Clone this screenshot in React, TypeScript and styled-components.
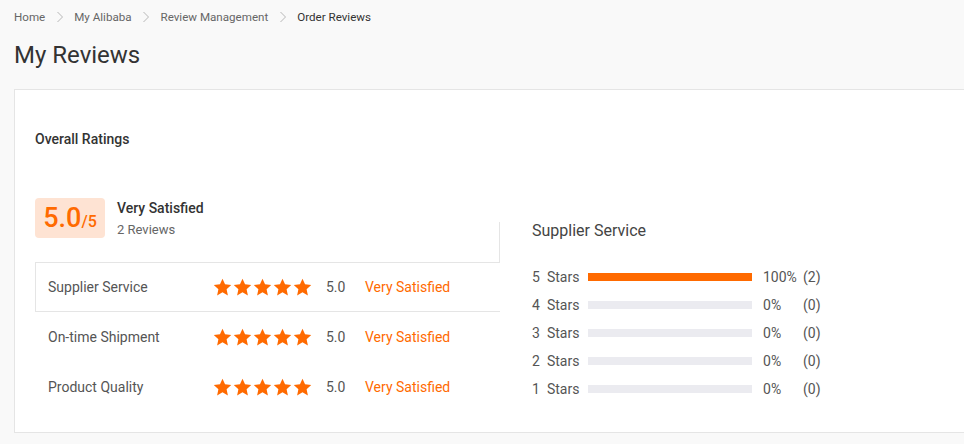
import React from "react";
import styled, { createGlobalStyle } from "styled-components";

const GlobalStyle = createGlobalStyle`
  html, body {
    margin: 0;
    padding: 0;
    overflow: hidden;
    background: #f9f9f9;
    font-family: Roboto, "Liberation Sans", Arial, sans-serif;
    color: #333;
  }
  * { box-sizing: border-box; }
`;

const ORANGE = "#ff6a00";

const Page = styled.div`
  padding: 8px 0 0 14px;
  width: 1000px;
`;

const Crumbs = styled.nav`
  display: flex;
  align-items: center;
  height: 18px;
  font-size: 11.6px;
  line-height: 18px;
  color: #666;
`;

const Crumb = styled.span<{ $current?: boolean }>`
  color: ${(p) => (p.$current ? "#333" : "#666")};
`;

const Sep = styled.span`
  display: inline-flex;
  width: 29px;
  justify-content: center;
  color: #b5b5b5;
`;

const Title = styled.h1`
  margin: 14px 0 0;
  font-size: 24px;
  line-height: 30px;
  font-weight: 400;
  color: #333;
`;

const Card = styled.section`
  margin-top: 19px;
  background: #fff;
  border: 1px solid #e5e5e5;
  padding: 39px 0 20px 20px;
`;

const SectionTitle = styled.h2`
  margin: 0;
  font-size: 14px;
  line-height: 20px;
  font-weight: 500;
  color: #333;
`;

const Body = styled.div`
  display: flex;
  margin-top: 49px;
`;

const LeftCol = styled.div`
  width: 465px;
  flex: none;
`;

const Summary = styled.div`
  display: flex;
  align-items: flex-start;
  gap: 12px;
  height: 40px;
`;

const ScoreBox = styled.div`
  width: 70px;
  height: 40px;
  border-radius: 4px;
  background: #fee3d3;
  color: ${ORANGE};
  display: flex;
  align-items: baseline;
  justify-content: center;
  padding-top: 2px;
`;

const ScoreBig = styled.span`
  font-size: 27px;
  line-height: 36px;
  font-weight: 500;
`;

const ScoreSmall = styled.span`
  font-size: 16px;
  font-weight: 500;
`;

const SummaryText = styled.div`
  display: flex;
  flex-direction: column;
  gap: 2px;
`;

const SummaryLabel = styled.div`
  font-size: 14px;
  line-height: 20px;
  font-weight: 500;
  color: #333;
`;

const SummaryCount = styled.div`
  font-size: 13px;
  line-height: 20px;
  color: #666;
`;

const List = styled.div`
  margin-top: -16px;
  padding-top: 40px;
  border-right: 1px solid #e5e5e5;
`;

const Row = styled.div<{ $active?: boolean }>`
  position: relative;
  display: grid;
  grid-template-columns: 165px 99px 53px auto;
  align-items: center;
  height: 50px;
  padding-left: 12px;
  margin-right: -1px;
  background: #fff;
  border: 1px solid ${(p) => (p.$active ? "#e5e5e5" : "transparent")};
  border-right: none;
`;

const RowLabel = styled.span`
  font-size: 14px;
  color: #555;
`;

const Stars = styled.span`
  display: flex;
  gap: 1px;
`;

const RowScore = styled.span`
  padding-left: 14px;
  font-size: 14px;
  color: #555;
`;

const RowVerdict = styled.span`
  font-size: 14px;
  color: ${ORANGE};
`;

const RightCol = styled.div`
  flex: 1;
  padding: 22px 0 0 32px;
`;

const RightTitle = styled.h3`
  margin: 0 0 21px;
  font-size: 16px;
  line-height: 22px;
  font-weight: 400;
  color: #444;
`;

const DistRow = styled.div`
  display: grid;
  grid-template-columns: 56px 164px 40px auto;
  align-items: center;
  height: 28px;
  font-size: 14px;
  color: #555;
`;

const DistLabel = styled.span`
  display: flex;
  gap: 7px;
`;

const Track = styled.div`
  height: 8px;
  background: #ebebf0;
`;

const Fill = styled.div`
  height: 100%;
  background: ${ORANGE};
`;

const Pct = styled.span`
  padding-left: 11px;
  white-space: nowrap;
`;

const Count = styled.span`
  padding-left: 11px;
`;

const Chevron = () => (
  <svg width="8" height="12" viewBox="0 0 8 12" fill="none">
    <polyline points="1.5,1 6.5,6 1.5,11" stroke="#b8b8b8" strokeWidth="1" />
  </svg>
);

const Star = () => (
  <svg width="19" height="19" viewBox="0 0 24 24">
    <polygon
      fill={ORANGE}
      points="12,1 15.2,8 23,8.9 17.2,14.1 18.8,22 12,18 5.2,22 6.8,14.1 1,8.9 8.8,8"
    />
  </svg>
);

const ratings = [
  { label: "Supplier Service", active: true },
  { label: "On-time Shipment", active: false },
  { label: "Product Quality", active: false },
];

const dist = [
  { n: 5, pct: 100, count: 2 },
  { n: 4, pct: 0, count: 0 },
  { n: 3, pct: 0, count: 0 },
  { n: 2, pct: 0, count: 0 },
  { n: 1, pct: 0, count: 0 },
];

export default function App() {
  return (
    <>
      <GlobalStyle />
      <Page>
        <Crumbs>
          <Crumb>Home</Crumb>
          <Sep><Chevron /></Sep>
          <Crumb>My Alibaba</Crumb>
          <Sep><Chevron /></Sep>
          <Crumb>Review Management</Crumb>
          <Sep><Chevron /></Sep>
          <Crumb $current>Order Reviews</Crumb>
        </Crumbs>
        <Title>My Reviews</Title>
        <Card>
          <SectionTitle>Overall Ratings</SectionTitle>
          <Body>
            <LeftCol>
              <Summary>
                <ScoreBox>
                  <ScoreBig>5.0</ScoreBig>
                  <ScoreSmall>/5</ScoreSmall>
                </ScoreBox>
                <SummaryText>
                  <SummaryLabel>Very Satisfied</SummaryLabel>
                  <SummaryCount>2 Reviews</SummaryCount>
                </SummaryText>
              </Summary>
              <List>
                {ratings.map((r) => (
                  <Row key={r.label} $active={r.active}>
                    <RowLabel>{r.label}</RowLabel>
                    <Stars>
                      {[0, 1, 2, 3, 4].map((i) => (
                        <Star key={i} />
                      ))}
                    </Stars>
                    <RowScore>5.0</RowScore>
                    <RowVerdict>Very Satisfied</RowVerdict>
                  </Row>
                ))}
              </List>
            </LeftCol>
            <RightCol>
              <RightTitle>Supplier Service</RightTitle>
              {dist.map((d) => (
                <DistRow key={d.n}>
                  <DistLabel>
                    <span>{d.n}</span>
                    <span>Stars</span>
                  </DistLabel>
                  <Track>
                    <Fill style={{ width: `${d.pct}%` }} />
                  </Track>
                  <Pct>{d.pct}%</Pct>
                  <Count>({d.count})</Count>
                </DistRow>
              ))}
            </RightCol>
          </Body>
        </Card>
      </Page>
    </>
  );
}
